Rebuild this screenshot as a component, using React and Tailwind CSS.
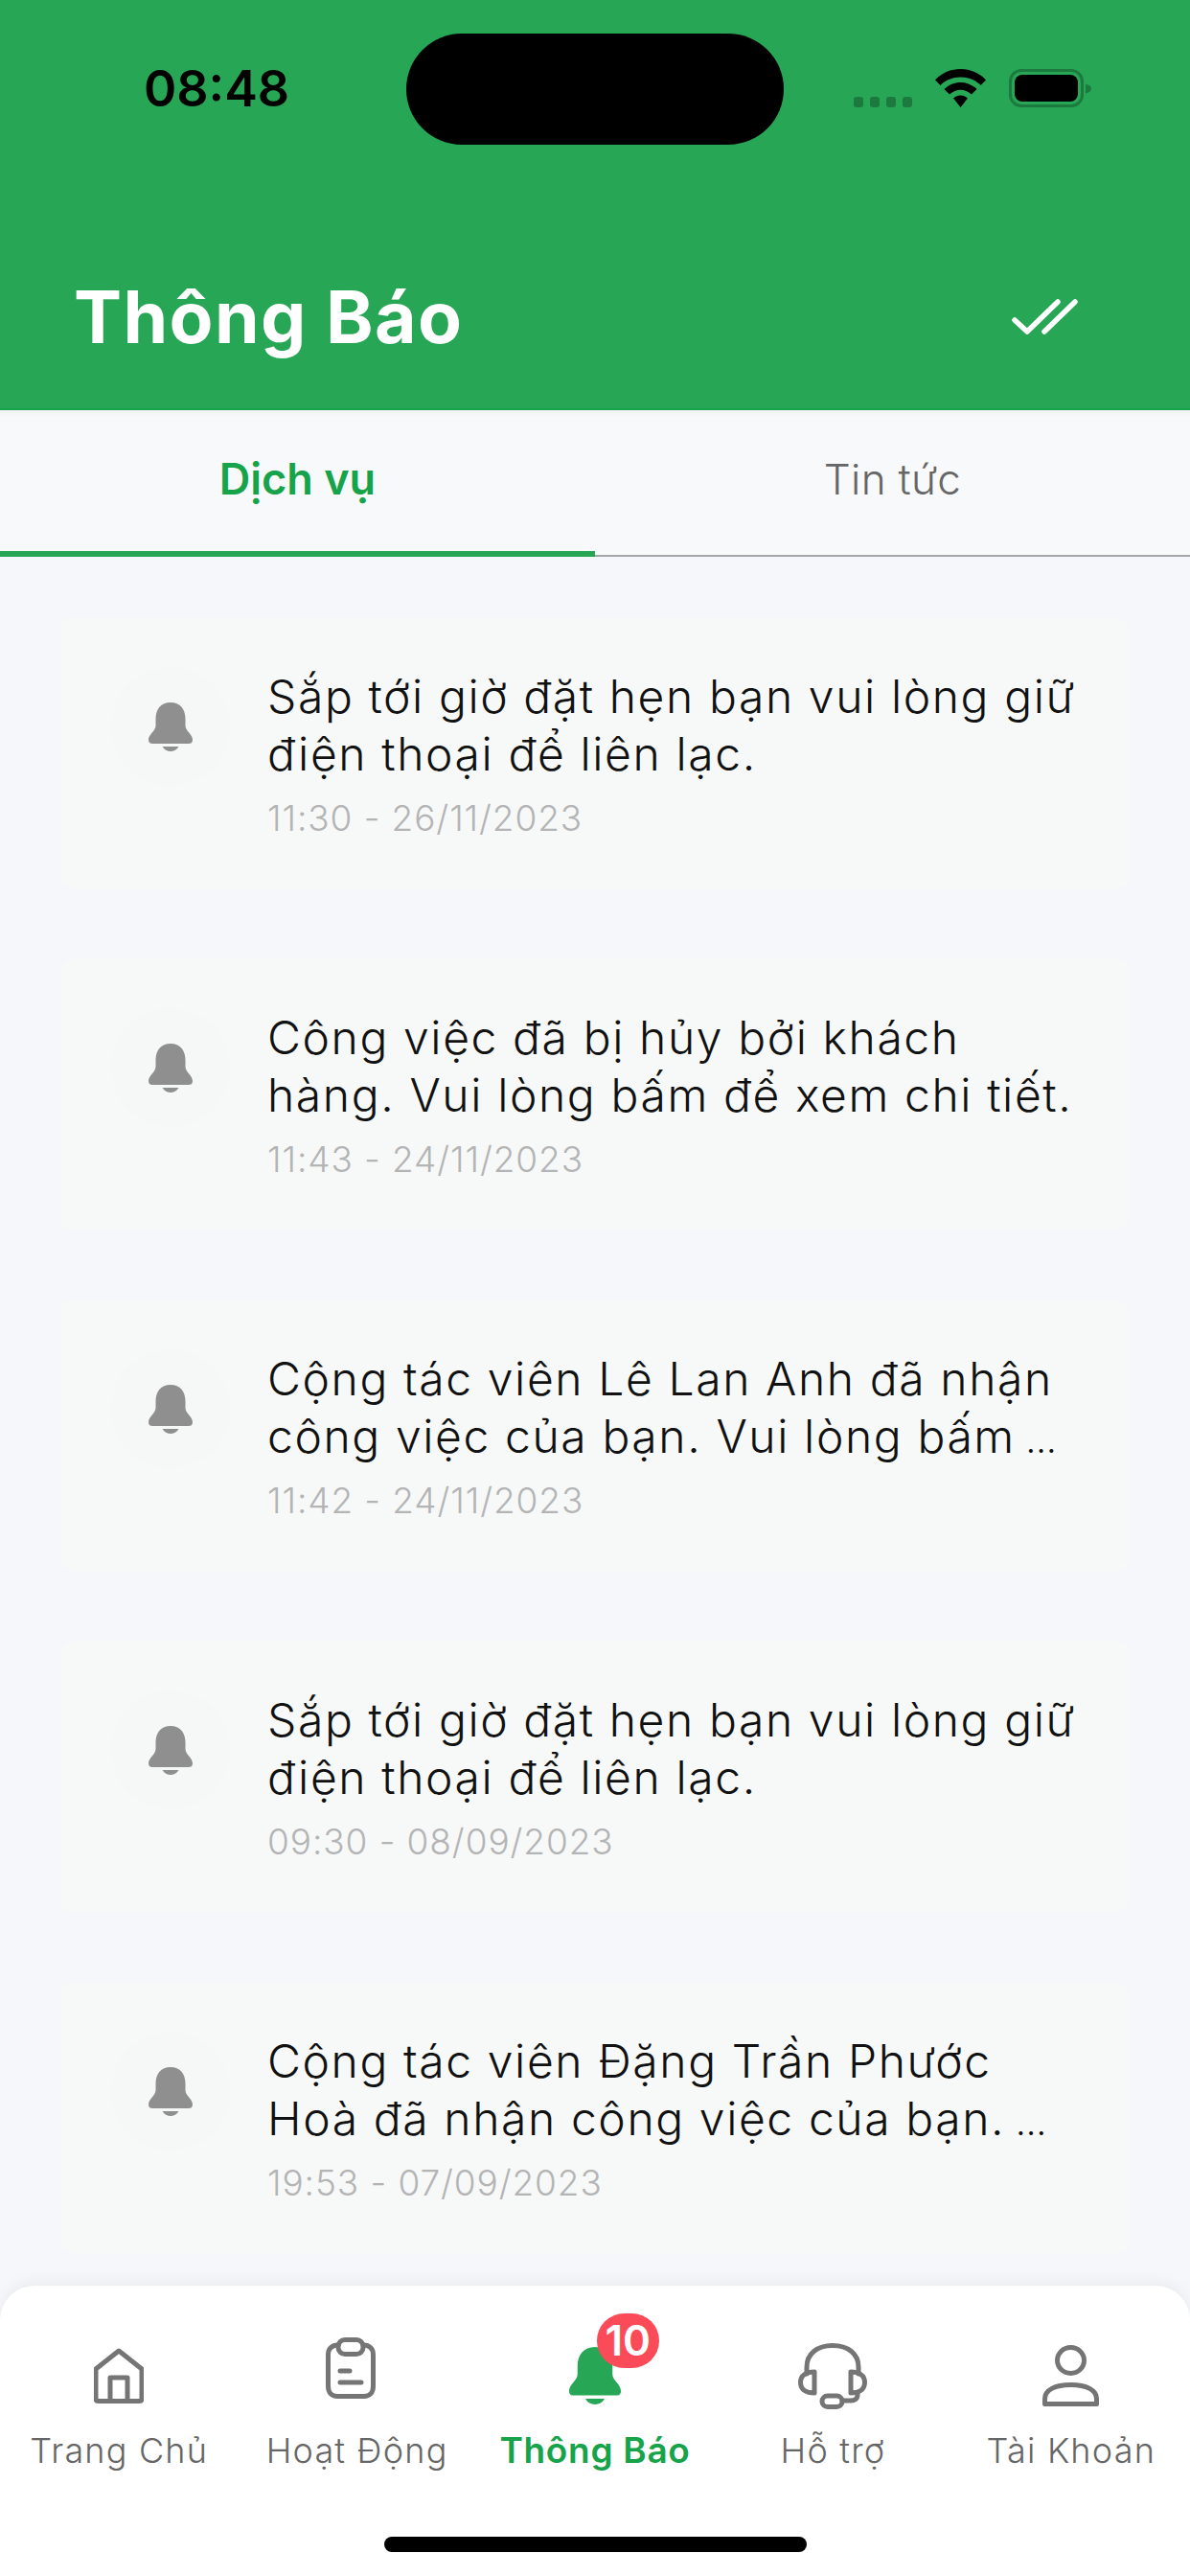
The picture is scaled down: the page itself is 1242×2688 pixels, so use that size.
import React from 'react';

const notifications = [
  { lines: ['Sắp tới giờ đặt hẹn bạn vui lòng giữ', 'điện thoại để liên lạc.'], time: '11:30 - 26/11/2023' },
  { lines: ['Công việc đã bị hủy bởi khách', 'hàng. Vui lòng bấm để xem chi tiết.'], time: '11:43 - 24/11/2023' },
  { lines: ['Cộng tác viên Lê Lan Anh đã nhận', 'công việc của bạn. Vui lòng bấm'], time: '11:42 - 24/11/2023', more: true },
  { lines: ['Sắp tới giờ đặt hẹn bạn vui lòng giữ', 'điện thoại để liên lạc.'], time: '09:30 - 08/09/2023' },
  { lines: ['Cộng tác viên Đặng Trần Phước', 'Hoà đã nhận công việc của bạn.'], time: '19:53 - 07/09/2023', more: true },
];

const BellIcon = ({ className }) => (
  <svg viewBox="0 0 46 51" className={className} fill="currentColor">
    <path d="M23 0C33 0 38.5 7 38.5 17L38.5 24C38.5 30 46 33 46 39C46 42 44 43 42 43L4 43C2 43 0 42 0 39C0 33 7.5 30 7.5 24L7.5 17C7.5 7 13 0 23 0Z" />
    <path d="M14.5 46L31.5 46C29.5 49.5 26.5 51 23 51C19.5 51 16.5 49.5 14.5 46Z" />
  </svg>
);

const HomeIcon = () => (
  <svg viewBox="0 0 52 58" className="w-[52px] h-[58px]" fill="none" stroke="#757575" strokeWidth="5" strokeLinejoin="round">
    <path d="M26 3L50 22V53C50 54.5 49 55.5 47.5 55.5H4.5C3 55.5 2 54.5 2 53V22Z" />
    <path d="M17 55V31H35V55" />
  </svg>
);

const ClipboardIcon = () => (
  <svg viewBox="0 0 52 64" className="w-[52px] h-[64px]" fill="none" stroke="#757575" strokeWidth="5" strokeLinecap="round">
    <path d="M13 8C6 8 2.5 12 2.5 18V51C2.5 58 6.5 61.5 12 61.5H40C45.5 61.5 49.5 58 49.5 51V18C49.5 12 46 8 39 8" />
    <rect x="13" y="2.5" width="26" height="15" rx="7" />
    <path d="M15 35H25M15 47H37" />
  </svg>
);

const HeadsetIcon = () => (
  <svg viewBox="0 0 72 69" className="w-[72px] h-[69px]" fill="none" stroke="#757575" strokeWidth="5" strokeLinecap="round" strokeLinejoin="round">
    <path d="M9 32V25C9 11 20 2.5 36 2.5C52 2.5 63 11 63 25V32" />
    <path d="M17 30V52C9 52 2.5 49 2.5 41C2.5 33 9 30 17 30Z" />
    <path d="M55 30V52C63 52 69.5 49 69.5 41C69.5 33 63 30 55 30Z" />
    <path d="M62 52V54C62 58 59 60 55 60H46" />
    <rect x="25" y="55" width="21" height="11.5" rx="5.7" />
  </svg>
);

const PersonIcon = () => (
  <svg viewBox="0 0 59 64" className="w-[59px] h-[64px]" fill="none" stroke="#757575" strokeWidth="5">
    <ellipse cx="29.5" cy="16" rx="14" ry="13.5" />
    <path d="M2.5 61.5V56C2.5 47 13 41.5 29.5 41.5C46 41.5 56.5 47 56.5 56V61.5Z" strokeLinejoin="round" />
  </svg>
);

const WifiIcon = () => (
  <svg viewBox="0 0 53 40" className="w-[53px] h-[40px]" fill="#000">
    <path d="M0 11.5C14 -3.8 39 -3.8 53 11.5L47.5 17C36.5 5.5 16.5 5.5 5.5 17Z" />
    <path d="M9.5 21C19 11.5 34 11.5 43.5 21L38 26.5C31 20 22 20 15 26.5Z" />
    <path d="M19 30.5C23.5 26.5 29.5 26.5 34 30.5L26.5 40Z" />
  </svg>
);

const BatteryIcon = () => (
  <div className="flex items-center">
    <div className="w-[78px] h-[40px] rounded-[13px] border-[3px] border-[#1c7a3f] p-[3px]">
      <div className="w-full h-full rounded-[8px] bg-black"></div>
    </div>
    <svg viewBox="0 0 8 13" className="w-[6px] h-[13px] ml-[2px]" fill="#1c7a3f">
      <path d="M0 0C5 1 8 3 8 6.5C8 10 5 12 0 13Z" />
    </svg>
  </div>
);

const NavItem = ({ label, icon, active, iconClass }) => (
  <div className="flex flex-col items-center">
    <div className={`h-[90px] flex items-center justify-center ${iconClass}`}>{icon}</div>
    <span className={`mt-[11px] leading-[44px] whitespace-nowrap ${active ? 'text-[37px] tracking-[0.7px] font-semibold text-[#16a34a]' : 'text-[36px] tracking-[1.2px] font-light text-[#666666]'}`}>
      {label}
    </span>
  </div>
);

export default function App() {
  return (
    <div className="w-[1242px] h-[2688px] flex flex-col overflow-hidden bg-[#f5f7fb] font-['Inter',sans-serif]">
      {/* Header */}
      <header className="h-[428px] shrink-0 bg-[#27a756] border-b-2 border-[#16a34a] px-[79px]">
        <div className="flex items-start h-[151px] pt-[35px]">
          <span className="w-[345px] pl-[71px] pt-[28px] text-[52px] leading-[60px] font-semibold text-black">08:48</span>
          <div className="w-[394px] h-[116px] rounded-full bg-black"></div>
          <div className="flex items-end ml-[73px] mt-[37px]">
            <div className="flex gap-[7px] mb-0">
              <span className="w-[10px] h-[11px] rounded-[3px] bg-[#1c7a3f]"></span>
              <span className="w-[10px] h-[11px] rounded-[3px] bg-[#1c7a3f]"></span>
              <span className="w-[10px] h-[11px] rounded-[3px] bg-[#1c7a3f]"></span>
              <span className="w-[10px] h-[11px] rounded-[3px] bg-[#1c7a3f]"></span>
            </div>
            <div className="ml-[24px]"><WifiIcon /></div>
            <div className="ml-[24px]"><BatteryIcon /></div>
          </div>
        </div>
        <div className="flex items-center justify-between h-[275px] pt-[84px]">
          <h1 className="text-[75px] leading-[90px] font-bold text-white tracking-[1.4px] ml-[-2px]">Thông Báo</h1>
          <svg viewBox="0 0 69 37" className="w-[69px] h-[37px] mr-[38px]" fill="none" stroke="#fff" strokeWidth="5.5" strokeLinecap="round" strokeLinejoin="round">
            <path d="M3 22L16 34L48 3" />
            <path d="M34 34L66 3" />
          </svg>
        </div>
      </header>

      {/* Tabs */}
      <div className="h-[153px] shrink-0 grid grid-cols-2 bg-[#f8f9fa] border-b-2 border-[#a6a6a6] shadow-[inset_0_10px_10px_-10px_rgba(0,0,0,0.08)]">
        <div className="flex items-center justify-center border-b-[6px] border-[#27a756] mb-[-2px] pb-[4px]">
          <span className="text-[45px] font-semibold text-[#16a34a]">Dịch vụ</span>
        </div>
        <div className="flex items-center justify-center pb-[8px]">
          <span className="text-[44px] font-light tracking-[0.3px] text-[#666666]">Tin tức</span>
        </div>
      </div>

      {/* Notification list */}
      <main className="flex-1 min-h-0 overflow-hidden flex flex-col gap-[74px] px-[64px] pt-[64px]">
        {notifications.map((item, i) => (
          <div key={i} className="h-[282px] shrink-0 flex rounded-[12px] bg-[#f7f9f9] pl-[52px] pt-[51px]">
            <div className="w-[124px] h-[124px] shrink-0 rounded-full bg-[#f6f7f7] flex items-center justify-center text-[#8f8f8f]">
              <BellIcon className="w-[46px] h-[51px]" />
            </div>
            <div className="ml-[39px] pt-[1px] min-w-0">
              <p className="text-[48px] leading-[60px] font-light tracking-[1.6px] text-[#111111] whitespace-nowrap">
                {item.lines[0]}
                <br />
                {item.lines[1]}
                {item.more && <span className="text-[38px] leading-none tracking-normal"> …</span>}
              </p>
              <p className="mt-[15px] text-[37px] leading-[44px] font-light tracking-[0.9px] text-[#b4b4b4] whitespace-nowrap">{item.time}</p>
            </div>
          </div>
        ))}
      </main>

      {/* Bottom nav */}
      <nav className="h-[303px] shrink-0 bg-white rounded-t-[36px] shadow-[0_-4px_16px_rgba(0,0,0,0.05)] flex flex-col">
        <div className="grid grid-cols-5 pt-[49px]">
          <NavItem label="Trang Chủ" icon={<HomeIcon />} />
          <NavItem label="Hoạt Động" iconClass="pr-[14px] pb-[16px]" icon={<ClipboardIcon />} />
          <div className="relative">
            <NavItem label="Thông Báo" active iconClass="text-[#27a756]" icon={<BellIcon className="w-[56px] h-[60px]" />} />
            <span className="absolute left-[126px] top-[-20px] w-[65px] h-[57px] rounded-full bg-[#fb4b58] text-white text-[44px] leading-[57px] font-semibold text-center">10</span>
          </div>
          <NavItem label="Hỗ trợ" icon={<HeadsetIcon />} />
          <NavItem label="Tài Khoản" icon={<PersonIcon />} />
        </div>
        <div className="mt-auto mb-[25px] mx-auto w-[441px] h-[16px] rounded-full bg-black"></div>
      </nav>
    </div>
  );
}
